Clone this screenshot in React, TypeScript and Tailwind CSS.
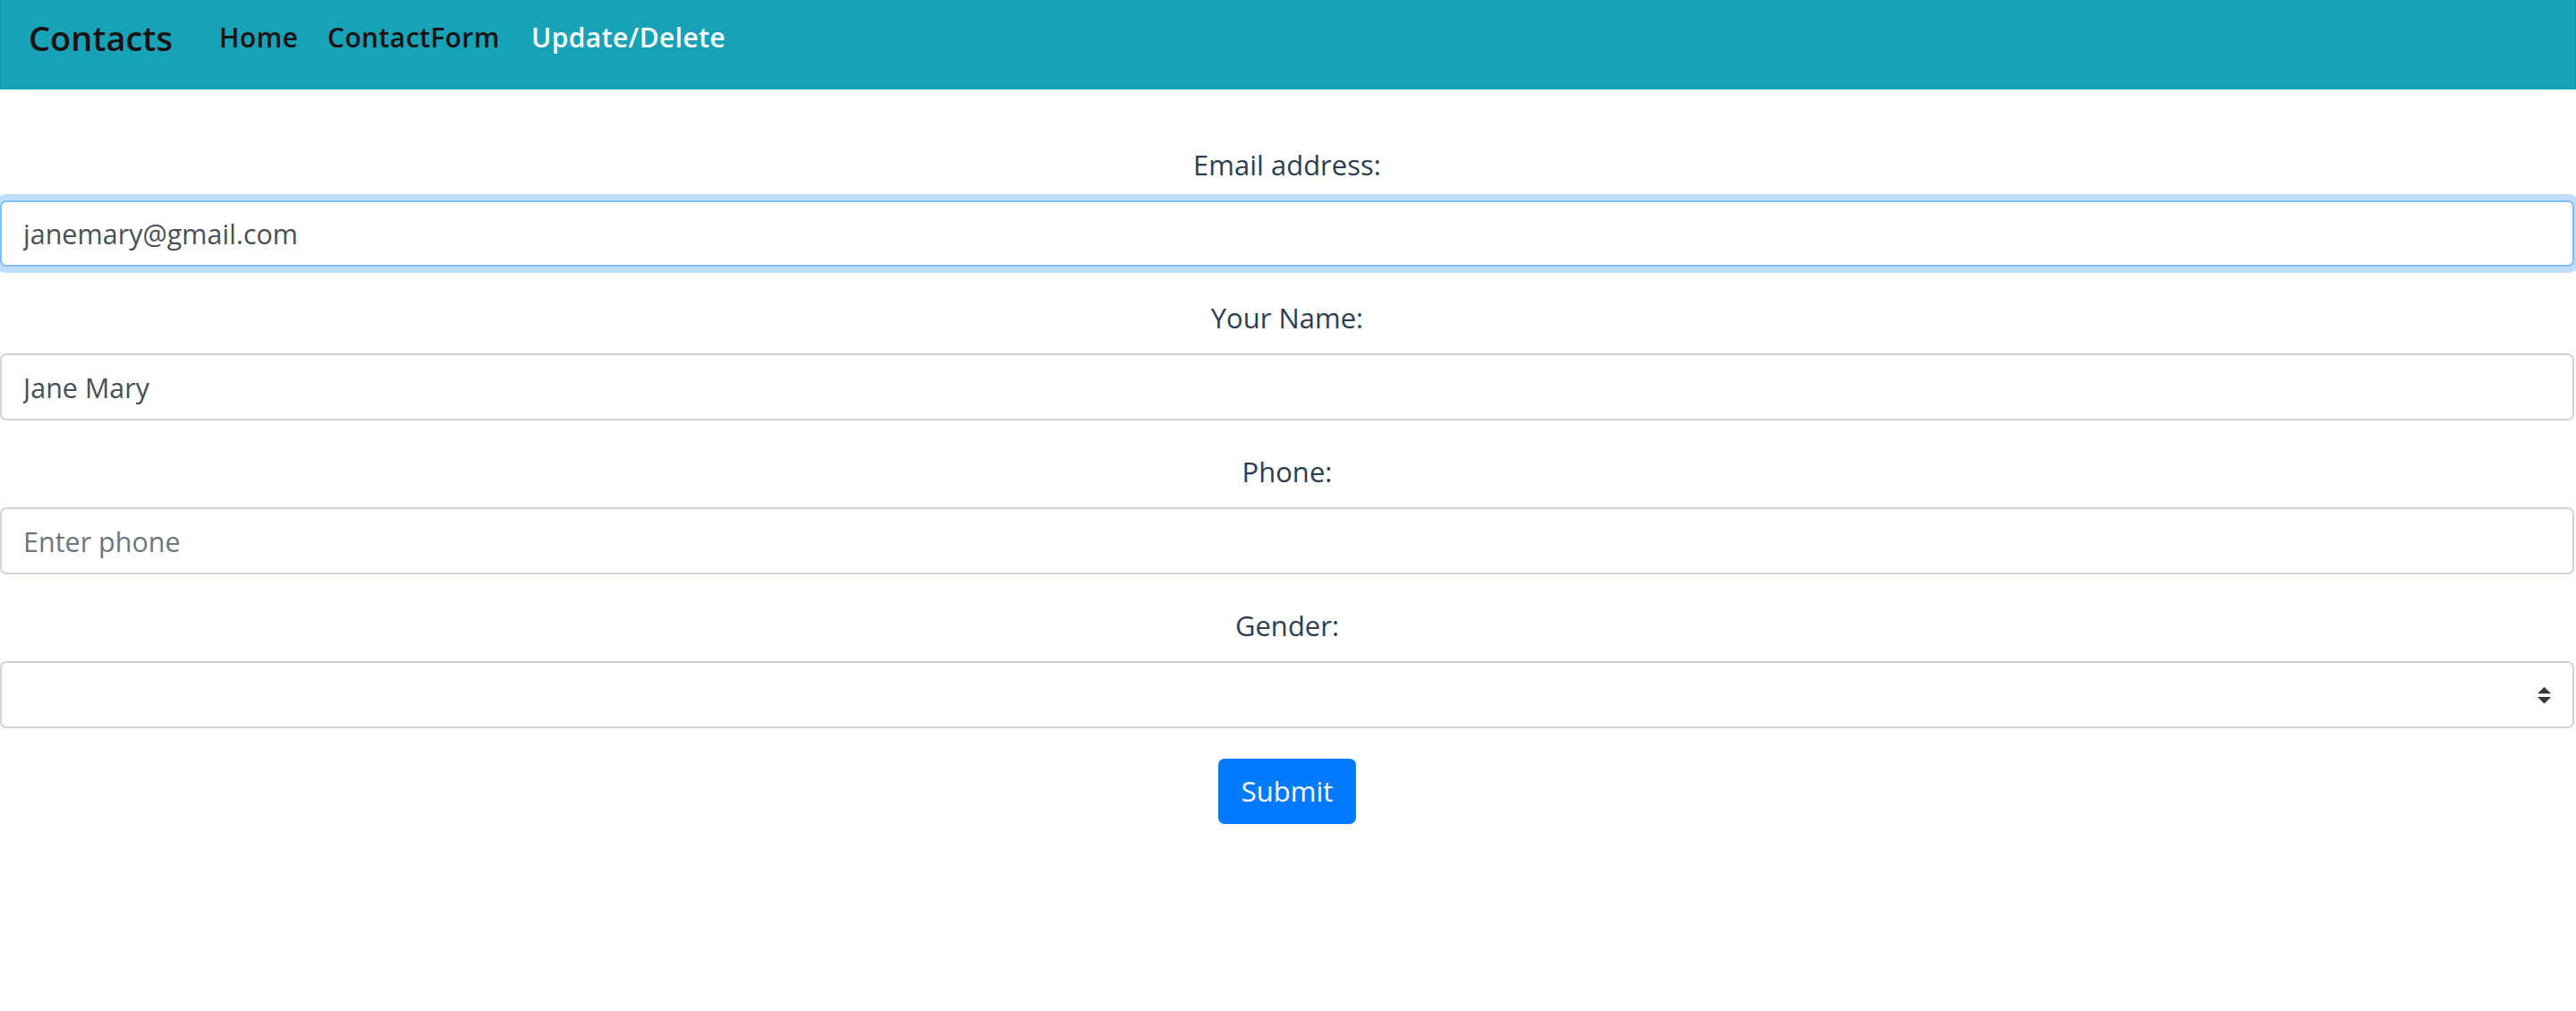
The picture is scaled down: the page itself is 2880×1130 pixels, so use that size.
import React from "react";

const font = { fontFamily: "'Open Sans', 'Noto Sans', sans-serif" };

function Label({ children, first }: { children: React.ReactNode; first?: boolean }) {
  return (
    <label
      className={`block text-center text-[31px] leading-[44px] text-[#2c3e50] ${first ? "mt-[62px]" : "mt-[35px]"} mb-[18px]`}
    >
      {children}
    </label>
  );
}

export default function App() {
  return (
    <div className="min-h-[1130px] bg-white" style={font}>
      <nav className="flex h-[100px] items-center bg-[#17a2b8] pb-[16px] border-x border-[#1597ab]">
        <a className="w-[244px] pl-[31px] text-[38px] font-semibold leading-none text-[#1a1212]">Contacts</a>
        <a className="w-[121px] text-[30px] font-semibold leading-none tracking-[0.4px] text-[#1a1212]">Home</a>
        <a className="w-[228px] text-[30px] font-semibold leading-none tracking-[0.4px] text-[#1a1212]">ContactForm</a>
        <a className="text-[30px] font-semibold leading-none tracking-[0.4px] text-white">Update/Delete</a>
      </nav>

      <form className="pr-[2px]">
        <Label first>Email address:</Label>
        <input
          type="email"
          defaultValue="janemary@gmail.com"
          className="block h-[74px] w-full rounded-[7px] border-2 border-[#80bdff] bg-white px-[24px] text-[30.5px] text-[#495057] shadow-[0_0_0_7px_rgba(0,123,255,0.25)] outline-none"
          style={font}
        />

        <Label>Your Name:</Label>
        <input
          type="text"
          defaultValue="Jane Mary"
          className="block h-[75px] w-full rounded-[7px] border-2 border-[#ced4da] bg-white px-[24px] text-[30.5px] text-[#495057] outline-none"
          style={font}
        />

        <Label>Phone:</Label>
        <input
          type="text"
          placeholder="Enter phone"
          className="block h-[75px] w-full rounded-[7px] border-2 border-[#ced4da] bg-white px-[24px] text-[30.5px] text-[#495057] placeholder:text-[#6c757d] outline-none"
          style={font}
        />

        <Label>Gender:</Label>
        <div className="relative h-[75px] w-full rounded-[7px] border-2 border-[#ced4da] bg-white">
          <svg
            className="absolute right-[24px] top-1/2 -translate-y-1/2"
            width="15"
            height="19"
            viewBox="0 0 4 5"
          >
            <path d="M2 0L0 2h4zm0 5L0 3h4z" fill="#343a40" />
          </svg>
        </div>

        <div className="mt-[34px] flex justify-center">
          <button
            type="button"
            className="h-[73px] w-[154px] rounded-[7px] bg-[#007bff] text-[31px] text-white"
            style={font}
          >
            Submit
          </button>
        </div>
      </form>
    </div>
  );
}
